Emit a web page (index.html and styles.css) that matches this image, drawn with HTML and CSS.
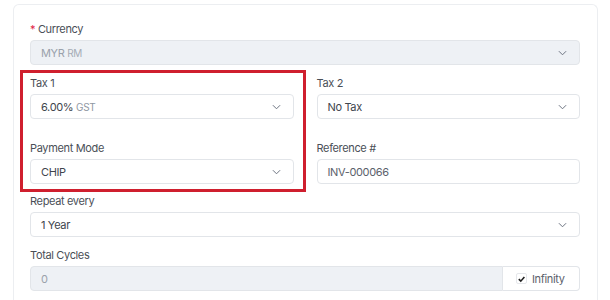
FILE: index.html
```html
<!DOCTYPE html>
<html>
<head>
<meta charset="utf-8">
<link rel="stylesheet" href="styles.css">
</head>
<body>
<div class="card">
  <div class="field">
    <label class="label"><span class="req">*</span> Currency</label>
    <div class="control select disabled">
      <span class="value muted">MYR <small class="sub">RM</small></span>
      <svg class="chev" viewBox="0 0 10 6"><path d="M1 1l4 4 4-4"/></svg>
    </div>
  </div>
  <div class="grid2">
    <div class="col highlight">
      <div class="field">
        <label class="label">Tax 1</label>
        <div class="control select">
          <span class="value">6.00% <small class="sub">GST</small></span>
          <svg class="chev" viewBox="0 0 10 6"><path d="M1 1l4 4 4-4"/></svg>
        </div>
      </div>
      <div class="field">
        <label class="label">Payment Mode</label>
        <div class="control select">
          <span class="value">CHIP</span>
          <svg class="chev" viewBox="0 0 10 6"><path d="M1 1l4 4 4-4"/></svg>
        </div>
      </div>
    </div>
    <div class="col">
      <div class="field">
        <label class="label">Tax 2</label>
        <div class="control select">
          <span class="value">No Tax</span>
          <svg class="chev" viewBox="0 0 10 6"><path d="M1 1l4 4 4-4"/></svg>
        </div>
      </div>
      <div class="field">
        <label class="label">Reference #</label>
        <div class="control">
          <span class="value ref">INV-000066</span>
        </div>
      </div>
    </div>
  </div>
  <div class="field">
    <label class="label">Repeat every</label>
    <div class="control select">
      <span class="value">1 Year</span>
      <svg class="chev" viewBox="0 0 10 6"><path d="M1 1l4 4 4-4"/></svg>
    </div>
  </div>
  <div class="field">
    <label class="label">Total Cycles</label>
    <div class="group">
      <div class="control disabled grow"><span class="value muted">0</span></div>
      <div class="addon">
        <span class="check"><svg viewBox="0 0 10 10"><path d="M2 5.2l2.2 2.2L8.2 2.8"/></svg></span>
        <span>Infinity</span>
      </div>
    </div>
  </div>
</div>
</body>
</html>
```
FILE: styles.css
```css
* { box-sizing: border-box; }
html, body { margin: 0; padding: 0; background: #fff; }
body {
  font-family: Inter, "Noto Sans", sans-serif;
  font-size: 11px;
  letter-spacing: -0.35px;
  color: #4a4f57;
  padding: 4px 12px 0 13px;
}
.card {
  border: 1px solid #eceef1;
  border-bottom: none;
  border-radius: 6px 6px 0 0;
  padding: 17px 17px 10px 16px;
  min-height: 300px;
}
.field { display: flex; flex-direction: column; margin-bottom: 11px; }
.label {
  display: block;
  line-height: 14px;
  margin-bottom: 4px;
  color: #4a4f57;
}
.req { color: #e11d48; }
.control {
  height: 25px;
  border: 1px solid #e2e5e9;
  border-radius: 4px;
  background: #fff;
  display: flex;
  align-items: center;
  padding: 0 12px 0 10px;
  color: #40454d;
}
.control.disabled { background: #eef1f5; }
.value { flex: 1; white-space: nowrap; }
.value.muted { color: #9aa1ab; }
.value.ref { color: #5b616b; }
.sub { font-size: 10px; color: #8f97a3; }
.muted .sub { color: #a5acb6; }
.chev { width: 9px; height: 6px; fill: none; stroke: #6b7280; stroke-width: 1.1; }
.grid2 {
  display: grid;
  grid-template-columns: 1fr 1fr;
  column-gap: 23px;
  margin-bottom: 10px;
}
.col { display: flex; flex-direction: column; gap: 22px; position: relative; }
.col .field { margin-bottom: 0; }
.highlight::before {
  content: "";
  position: absolute;
  left: -10px;
  right: -12px;
  top: -6px;
  bottom: -8px;
  border: 3px solid #cf1f2e;
  pointer-events: none;
}
.group { display: flex; height: 25px; }
.group .grow { flex: 1; border-radius: 4px 0 0 4px; }
.addon {
  width: 77px;
  border: 1px solid #e2e5e9;
  border-left: none;
  border-radius: 0 4px 4px 0;
  background: #fff;
  display: flex;
  align-items: center;
  gap: 5px;
  padding-left: 13px;
  color: #5b616b;
}
.check {
  width: 11px; height: 11px;
  border: 1px solid #e5e7eb;
  border-radius: 2px;
  display: flex; align-items: center; justify-content: center;
}
.check svg { width: 10px; height: 10px; fill: none; stroke: #222; stroke-width: 1.8; }
```
